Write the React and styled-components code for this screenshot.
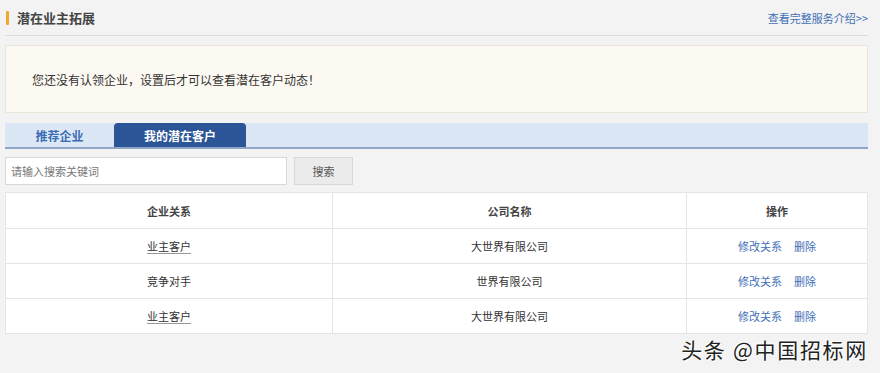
import React from 'react';
import styled, { createGlobalStyle } from 'styled-components';

const GlobalStyle = createGlobalStyle`
  html, body {
    margin: 0;
    padding: 0;
    background: #f3f3f3;
  }
  body {
    font-family: "Noto Sans CJK SC", "Liberation Sans", sans-serif;
    font-size: 12px;
    color: #333;
  }
`;

const rows = [
  { relation: '业主客户', company: '大世界有限公司' },
  { relation: '竞争对手', company: '世界有限公司' },
  { relation: '业主客户', company: '大世界有限公司' },
];

export default function App() {
  return (
    <>
      <GlobalStyle />
      <Page>
        <TitleBar>
          <Title>潜在业主拓展</Title>
          <MoreLink href="#">查看完整服务介绍&gt;&gt;</MoreLink>
        </TitleBar>

        <Notice>您还没有认领企业，设置后才可以查看潜在客户动态！</Notice>

        <Tabs>
          <Tab>推荐企业</Tab>
          <Tab $active>我的潜在客户</Tab>
        </Tabs>

        <SearchRow>
          <SearchInput placeholder="请输入搜索关键词" />
          <SearchButton>搜索</SearchButton>
        </SearchRow>

        <Table>
          <colgroup>
            <col style={{ width: 327 }} />
            <col style={{ width: 354 }} />
            <col />
          </colgroup>
          <thead>
            <tr>
              <Th>企业关系</Th>
              <Th>公司名称</Th>
              <Th>操作</Th>
            </tr>
          </thead>
          <tbody>
            {rows.map((r, i) => (
              <tr key={i}>
                <Td><Underlined $on={i !== 1}>{r.relation}</Underlined></Td>
                <Td>{r.company}</Td>
                <Td>
                  <Action href="#">修改关系</Action>
                  <Action href="#">删除</Action>
                </Td>
              </tr>
            ))}
          </tbody>
        </Table>

        <Watermark>头条 @中国招标网</Watermark>
      </Page>
    </>
  );
}

const Page = styled.div`
  position: relative;
  width: 863px;
  height: 373px;
  padding-left: 5px;
  box-sizing: content-box;
`;

const TitleBar = styled.div`
  display: flex;
  align-items: center;
  justify-content: space-between;
  height: 35px;
  border-bottom: 1px solid #dcdcdc;
`;

const Title = styled.h2`
  margin: 0;
  padding-left: 12px;
  position: relative;
  font-size: 13px;
  font-weight: bold;
  color: #444;
  line-height: 16px;
  &::before {
    content: '';
    position: absolute;
    left: 1px;
    top: 1px;
    width: 3px;
    height: 14px;
    background: #f0a830;
    border-radius: 1px;
  }
`;

const MoreLink = styled.a`
  color: #3f6fb5;
  font-size: 11px;
  text-decoration: none;
`;

const Notice = styled.div`
  margin-top: 9px;
  height: 68px;
  box-sizing: border-box;
  padding-left: 26px;
  display: flex;
  align-items: center;
  background: #fcf9f2;
  border: 1px solid #ebe6da;
  font-size: 12px;
  color: #333;
`;

const Tabs = styled.div`
  margin-top: 10px;
  height: 26px;
  box-sizing: border-box;
  display: flex;
  background: #dce7f5;
  border-bottom: 2px solid #8fa6c6;
`;

const Tab = styled.div`
  width: ${p => (p.$active ? '132px' : '109px')};
  display: flex;
  align-items: center;
  justify-content: center;
  font-size: 12px;
  font-weight: bold;
  color: ${p => (p.$active ? '#fff' : '#3a6cb3')};
  background: ${p => (p.$active ? '#2b5597' : 'transparent')};
  border-radius: 4px 4px 0 0;
`;

const SearchRow = styled.div`
  display: flex;
  gap: 7px;
  margin-top: 8px;
`;

const SearchInput = styled.input`
  width: 282px;
  height: 28px;
  box-sizing: border-box;
  border: 1px solid #d8d8d8;
  padding: 0 5px;
  font-family: inherit;
  font-size: 11px;
  outline: none;
  &::placeholder {
    color: #777;
  }
`;

const SearchButton = styled.button`
  width: 59px;
  height: 28px;
  border: 1px solid #d8d8d8;
  background: #ebebeb;
  font-family: inherit;
  font-size: 11px;
  color: #555;
`;

const Table = styled.table`
  margin-top: 7px;
  width: 863px;
  border-collapse: collapse;
  background: #fff;
  table-layout: fixed;
`;

const Th = styled.th`
  height: 35px;
  padding: 0;
  line-height: 14px;
  font-size: 11px;
  font-weight: bold;
  color: #444;
  border: 1px solid #e5e5e5;
  text-align: center;
`;

const Td = styled.td`
  height: 34px;
  padding: 0;
  line-height: 14px;
  font-size: 11px;
  color: #333;
  border: 1px solid #e5e5e5;
  text-align: center;
`;

const Underlined = styled.span`
  text-decoration: ${p => (p.$on ? 'underline' : 'none')};
  text-decoration-color: #999;
  text-underline-offset: 2px;
  color: #333;
`;

const Action = styled.a`
  color: #3f6fb5;
  text-decoration: none;
  font-size: 11px;
  margin: 0 6px;
`;

const Watermark = styled.div`
  position: absolute;
  right: 0;
  top: 334px;
  font-size: 21px;
  letter-spacing: 1.7px;
  color: #222;
  text-shadow: 1px 1px 0 #fff, -1px -1px 0 #fff;
  font-family: "Noto Sans CJK SC", sans-serif;
`;
